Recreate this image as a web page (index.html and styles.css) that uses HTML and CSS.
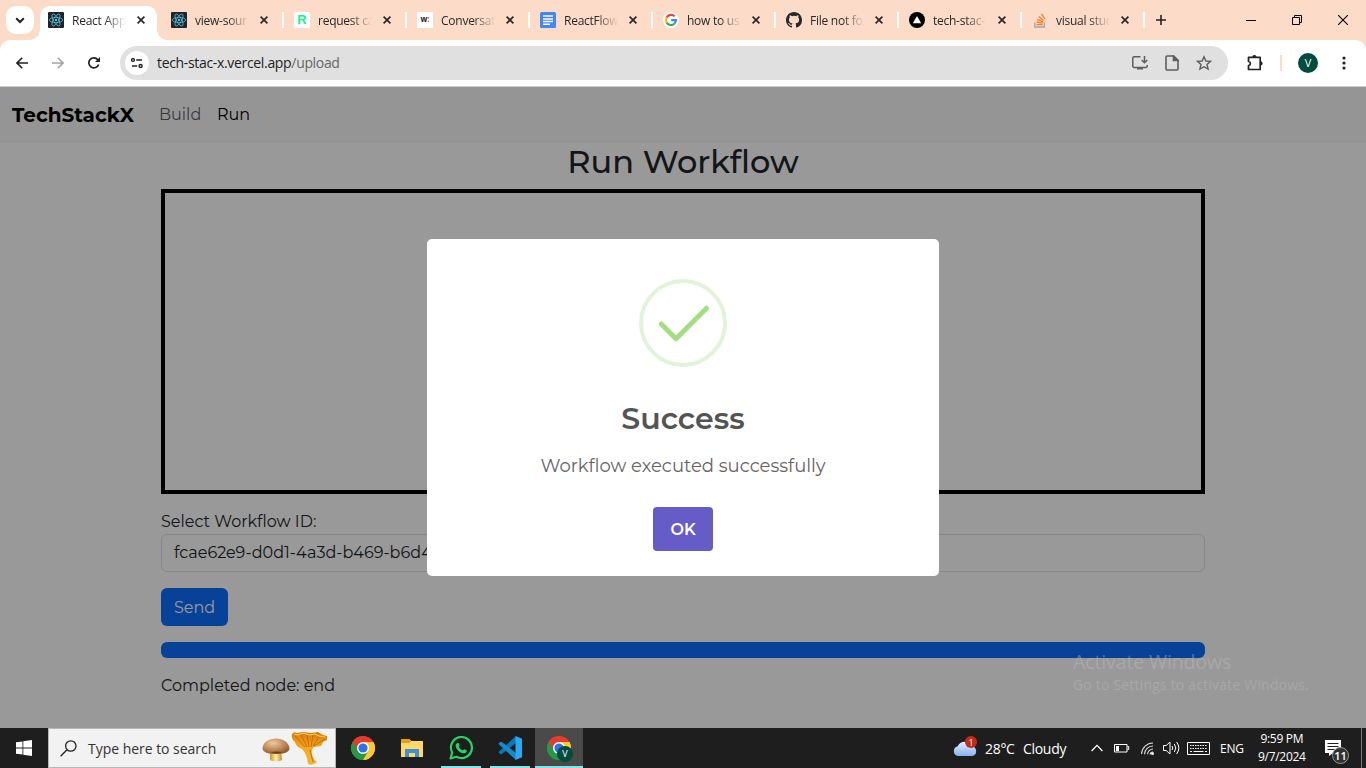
FILE: index.html
```html
<!DOCTYPE html>
<html lang="en">
<head>
<meta charset="utf-8">
<title>React App</title>
<link rel="stylesheet" href="styles.css">
</head>
<body>
<svg class="defs" width="0" height="0">
  <symbol id="close" viewBox="0 0 8 8"><path d="M.6.6l6.8 6.8M7.4.6L.6 7.4" stroke="#282828" stroke-width="1.7"/></symbol>
  <symbol id="react" viewBox="0 0 16 16"><rect width="16" height="16" rx="1" fill="#20232a"/><g fill="none" stroke="#58b9d3" stroke-width=".8"><ellipse cx="8" cy="8" rx="6.7" ry="2.6"/><ellipse cx="8" cy="8" rx="6.7" ry="2.6" transform="rotate(60 8 8)"/><ellipse cx="8" cy="8" rx="6.7" ry="2.6" transform="rotate(120 8 8)"/></g><circle cx="8" cy="8" r="1.3" fill="#58b9d3"/></symbol>
  <symbol id="chrome" viewBox="0 0 24 24"><path d="M12 12L1.61 6A12 12 0 0 1 22.39 6Z" fill="#e33b2e"/><path d="M12 12L22.39 6A12 12 0 0 1 12 24Z" fill="#fcc934"/><path d="M12 12L12 24A12 12 0 0 1 1.61 6Z" fill="#279847"/><path d="M12 6h10.39A12 12 0 0 1 12 24l5.2-9z" fill="#fcc934"/><path d="M1.61 6A12 12 0 0 1 22.39 6H12L6.8 15z" fill="#e33b2e"/><path d="M1.61 6l5.2 9L12 18l5.2-3L12 24A12 12 0 0 1 1.61 6z" fill="#279847"/><circle cx="12" cy="12" r="6" fill="#fff"/><circle cx="12" cy="12" r="4.6" fill="#2f73e8"/></symbol>
</svg>

<header class="browser">
  <div class="tabstrip">
    <button class="tab-search"><svg width="10" height="7" viewBox="0 0 10 7"><path d="M1.2 1.2L5 5l3.8-3.8" fill="none" stroke="#222" stroke-width="2"/></svg></button>
    <div class="tab tab-active"><svg class="fav"><use href="#react"/></svg><span class="tab-title">React App</span><svg class="x"><use href="#close"/></svg></div>
    <div class="tab"><svg class="fav"><use href="#react"/></svg><span class="tab-title">view-sour</span><svg class="x"><use href="#close"/></svg></div>
    <div class="tab"><span class="fav fav-r">R</span><span class="tab-title">request ca</span><svg class="x"><use href="#close"/></svg></div>
    <div class="tab"><span class="fav fav-w">w<i>:</i></span><span class="tab-title">Conversat</span><svg class="x"><use href="#close"/></svg></div>
    <div class="tab"><svg class="fav" viewBox="0 0 16 16"><rect width="16" height="16" rx="1.5" fill="#4285f4"/><path d="M3 4h10M3 7h10M3 9.5h10M3 12.2h7" stroke="#fff" stroke-width="1.4"/></svg><span class="tab-title">ReactFlow</span><svg class="x"><use href="#close"/></svg></div>
    <div class="tab"><svg class="fav" viewBox="0 0 16 16"><circle cx="8" cy="8" r="8" fill="#fff"/><g fill="none" stroke-width="2.1"><path d="M11.7 4.4A5 5 0 0 0 3.6 5.6" stroke="#ea4335"/><path d="M3.6 5.6a5 5 0 0 0 0 4.8" stroke="#fbbc05"/><path d="M3.6 10.4a5 5 0 0 0 7.7 1.4" stroke="#34a853"/><path d="M11.3 11.8A5 5 0 0 0 13 8.1H8.2" stroke="#4285f4"/></g></svg><span class="tab-title">how to us</span><svg class="x"><use href="#close"/></svg></div>
    <div class="tab"><svg class="fav" viewBox="0 0 16 16"><path fill="#24292f" d="M8 0C3.58 0 0 3.58 0 8c0 3.54 2.29 6.53 5.47 7.59.4.07.55-.17.55-.38 0-.19-.01-.82-.01-1.49-2.01.37-2.53-.49-2.69-.94-.09-.23-.48-.94-.82-1.13-.28-.15-.68-.52-.01-.53.63-.01 1.08.58 1.23.82.72 1.21 1.87.87 2.33.66.07-.52.28-.87.51-1.07-1.78-.2-3.64-.89-3.64-3.95 0-.87.31-1.59.82-2.15-.08-.2-.36-1.02.08-2.12 0 0 .67-.21 2.2.82a7.6 7.6 0 0 1 4 0c1.53-1.04 2.2-.82 2.2-.82.44 1.1.16 1.92.08 2.12.51.56.82 1.27.82 2.15 0 3.07-1.87 3.75-3.65 3.95.29.25.54.73.54 1.48 0 1.07-.01 1.93-.01 2.2 0 .21.15.46.55.38A8 8 0 0 0 16 8c0-4.42-3.58-8-8-8z"/></svg><span class="tab-title">File not fo</span><svg class="x"><use href="#close"/></svg></div>
    <div class="tab"><svg class="fav" viewBox="0 0 16 16"><circle cx="8" cy="8" r="8"/><path d="M8 4l4.2 7.2H3.8z" fill="#fff"/></svg><span class="tab-title">tech-stac-</span><svg class="x"><use href="#close"/></svg></div>
    <div class="tab"><svg class="fav" viewBox="0 0 16 16"><path d="M2.8 10.5V15h9.6v-4.5" fill="none" stroke="#a0a4a8" stroke-width="1.3"/><path d="M4.5 12.7h6.3M4.6 10l6.2 1.1M5.2 7.3l5.7 2.5M6.8 4.5l4.8 4M9.5 1.8l3.4 5.2" stroke="#f48024" stroke-width="1.3"/></svg><span class="tab-title">visual stud</span><svg class="x"><use href="#close"/></svg></div>
    <svg class="plus" viewBox="0 0 10 10"><path d="M5 0v10M0 5h10" stroke="#222" stroke-width="1.6"/></svg>
    <div class="window-controls">
      <svg width="10" height="10"><path d="M0 5.5h10" stroke="#000"/></svg>
      <svg width="10" height="10" fill="none" stroke="#000"><path d="M.5 2.5h7v7h-7zM2.5 2.5v-2h7v7h-2"/></svg>
      <svg width="10" height="10"><path d="M0 0l10 10M10 0L0 10" stroke="#000" stroke-width="1.1"/></svg>
    </div>
  </div>
  <div class="toolbar">
    <svg class="nav-ico" viewBox="0 0 12 12"><path d="M12 6H1.2M6.2.8L1 6l5.2 5.2" fill="none" stroke="#222" stroke-width="1.6"/></svg>
    <svg class="nav-ico" viewBox="0 0 12 12"><path d="M0 6h10.8M5.8.8L11 6l-5.2 5.2" fill="none" stroke="#a2a2a2" stroke-width="1.6"/></svg>
    <svg class="nav-ico" viewBox="0 0 12 12"><path d="M10.6 7.4A5 5 0 1 1 9.8 2.8L11 4" fill="none" stroke="#222" stroke-width="1.7"/><path d="M12 0v5H7z" fill="#222"/></svg>
    <div class="omnibox">
      <span class="site-info"><svg width="12" height="10" viewBox="0 0 12 10" fill="none" stroke="#222" stroke-width="1.4"><circle cx="2" cy="2" r="1.4"/><path d="M5.2 2H11M1 8h5.2"/><circle cx="9.6" cy="8" r="1.5"/></svg></span>
      <span class="url">tech-stac-x.vercel.app<em>/upload</em></span>
      <span class="omni-icons">
        <svg width="16" height="16" viewBox="0 0 16 16" fill="none" stroke="#5c5e60" stroke-width="1.5"><path d="M8.5 1.8H2a1.2 1.2 0 0 0-1.2 1.2v8.2A1.2 1.2 0 0 0 2 12.4h12a1.2 1.2 0 0 0 1.2-1.2V10M12.5 1v6.5M9.7 5l2.8 2.8L15.3 5"/><path d="M5 12.5h6v2H5z" fill="#5c5e60" stroke="none"/></svg>
        <svg width="14" height="16" viewBox="0 0 14 16" fill="none" stroke="#5c5e60" stroke-width="1.6"><path d="M8.5 1H2.2A1.2 1.2 0 0 0 1 2.2v11.6A1.2 1.2 0 0 0 2.2 15h9.6a1.2 1.2 0 0 0 1.2-1.2V5.5z"/><path d="M8.5 1v4.5H13z" fill="#5c5e60"/></svg>
        <svg width="16" height="16" viewBox="0 0 16 16"><path d="M8 1.7l1.9 4.3 4.7.4-3.6 3.1 1.1 4.6L8 11.7l-4.1 2.4L5 9.5 1.4 6.4l4.7-.4z" fill="none" stroke="#5c5e60" stroke-width="1.4"/></svg>
      </span>
    </div>
    <svg class="puzzle" viewBox="0 0 18 18"><path d="M2.5 3.3H14.200v12.200H2.500v-4c2.500-.3 2.500-3.700 0-4z" fill="none" stroke="#222" stroke-width="1.700" stroke-linejoin="round"/><path d="M6.300 3a2.100 2.100 0 0 1 4.200 0zM14.500 7.300a2.100 2.100 0 0 1 0 4.200z" fill="#222"/></svg>
    <span class="divider"></span>
    <span class="avatar">V</span>
    <svg class="kebab" viewBox="0 0 4 14"><g fill="#222"><circle cx="2" cy="2" r="1.6"/><circle cx="2" cy="7" r="1.6"/><circle cx="2" cy="12" r="1.6"/></g></svg>
  </div>
</header>

<main class="page">
  <nav class="navbar"><b class="brand">TechStackX</b><a class="link">Build</a><a class="link link-active">Run</a></nav>
  <section class="content">
    <h2 class="heading"><span>Run Workflow</span></h2>
    <div class="canvas"></div>
    <label class="label">Select Workflow ID:</label>
    <div class="select">fcae62e9-d0d1-4a3d-b469-b6d4</div>
    <button class="send">Send</button>
    <div class="progress"></div>
    <p class="status">Completed node: end</p>
  </section>
  <div class="overlay">
    <div class="modal">
      <svg class="check" viewBox="0 0 88 88" fill="none"><circle cx="44" cy="44" r="42" stroke="#e2f3d9" stroke-width="4"/><path d="M22.3 45L37 59.7 67.5 29.2" stroke="#a5dc86" stroke-width="5" stroke-linecap="round" stroke-linejoin="round"/></svg>
      <h3 class="modal-title">Success</h3>
      <p class="modal-text">Workflow executed successfully</p>
      <button class="ok">OK</button>
    </div>
  </div>
  <div class="watermark"><p class="wm-title">Activate Windows</p><p class="wm-text">Go to Settings to activate Windows.</p></div>
</main>

<footer class="taskbar">
  <div class="start"><svg width="16" height="16" viewBox="0 0 16 16" fill="#fff"><path d="M0 2.3l6.500-.9v6.200H0zM7.300 1.300L16 0v7.600H7.300zM0 8.400h6.500v6.200L0 13.700zM7.300 8.400H16V16l-8.700-1.200z"/></svg></div>
  <div class="search">
    <svg width="17" height="17" viewBox="0 0 17 17" fill="none" stroke="#222" stroke-width="1.3"><circle cx="10.8" cy="6" r="5.2"/><path d="M7 9.800L.6 16.300"/></svg>
    <span class="search-text">Type here to search</span>
    <svg class="mushrooms" viewBox="0 0 66 34">
      <defs><radialGradient id="cap" cx=".4" cy=".3" r=".75"><stop offset="0" stop-color="#edc9a0"/><stop offset=".6" stop-color="#bd8554"/><stop offset="1" stop-color="#8a5328"/></radialGradient><linearGradient id="stem"><stop offset="0" stop-color="#c99735"/><stop offset=".5" stop-color="#fff1a2"/><stop offset="1" stop-color="#c18b30"/></linearGradient><linearGradient id="gold" x2="0" y2="1"><stop offset="0" stop-color="#d77c0e"/><stop offset=".5" stop-color="#f7a91e"/><stop offset="1" stop-color="#efb63c"/></linearGradient></defs>
      <path d="M8 19h11l1 10q-6 3-12 0z" fill="url(#stem)"/><path d="M.5 18C.5 4 27 4 27.500 18q-1 5-13.500 5T.5 18z" fill="url(#cap)"/><path d="M9 21.500q5-2 11 0-5 2-11 0z" fill="#71411c"/>
      <path d="M30 3q2-3 5-1l6-1 8 1 7-1 5 3 4 1v4l-4 2-2 4-7 1q-3 2-2 7 1 5 5 8-4 4-9 2-1-10-6-15-6-2-7-7-4-3-3-8z" fill="url(#gold)"/><path d="M33 5l10 11M39 4l6 12M45 4l2 12M51 4l-2 12M57 6l-6 9M63 8l-11 7M48 19l3 12" stroke="#b9620a" stroke-width=".8" fill="none"/><path d="M32 3l4 1 5-2 6 2 6-1 4 2 6 1" stroke="#ffd24e" fill="none"/>
    </svg>
  </div>
  <div class="apps">
    <div class="app"><svg class="app-ico"><use href="#chrome"/></svg></div>
    <div class="app"><svg class="app-ico" viewBox="0 0 24 24"><path d="M1 3h8.500l1.500 2h12v16H1z" fill="#ffd86b"/><path d="M1 3h8.500l1.500 2-1.500 2H1z" fill="#e5a111"/><path d="M5 21v-8h14v8h-4v-4H9v4z" fill="#3c91d4"/></svg></div>
    <div class="app app-open"><svg class="app-ico" viewBox="0 0 24 24"><path d="M1.500 22.500l1.700-6A10.500 10.500 0 1 1 7.500 20.800z" fill="none" stroke="#25d366" stroke-width="2.200" stroke-linejoin="round"/><path d="M7.600 7.500c1-1.200 1.800-1 2.200 0l.7 1.600c.2.600-.9 1.400-.6 1.900.9 1.600 2.100 2.600 3.700 3.300.6.200 1.200-1.400 1.800-1.100l2 1c.6.300.4 1.400-.3 2.200-1.400 1.300-3.300 1-5.300 0-2.300-1.200-4.100-3.200-4.900-5.200-.5-1.500-.3-2.600.7-3.700z" fill="#25d366"/></svg></div>
    <div class="app app-open"><svg class="app-ico" viewBox="0 0 24 24"><path d="M18 0L1 15.500c-.5.500-.5 1 0 1.400l1.300 1.200q.7.500 1.400 0L18 7z" fill="#0877b9"/><path d="M18 24L1 8.500c-.5-.5-.5-1 0-1.400l1.300-1.200q.7-.5 1.400 0L18 17z" fill="#168ad0"/><path d="M17.500 0L24 2.700v18.600L17.500 24z" fill="#2aa9f2"/></svg></div>
    <div class="app app-open app-current"><svg class="app-ico"><use href="#chrome"/></svg><span class="profile">V</span></div>
  </div>
  <div class="weather"><svg width="25" height="24" viewBox="0 0 25 24"><defs><linearGradient id="cloud" x2="0" y2="1"><stop offset="0" stop-color="#e7effc"/><stop offset="1" stop-color="#86b0f0"/></linearGradient></defs><path d="M5 20a5 5 0 0 1-.3-9.800 7.500 7.500 0 0 1 13.800 0A5 5 0 0 1 19.500 20z" fill="url(#cloud)"/><circle cx="18" cy="6" r="6" fill="#c42b1c"/><text class="alert" x="18" y="9.500">1</text></svg><span class="temp">28°C</span><span class="cloudy">Cloudy</span></div>
  <div class="tray">
    <svg width="12" height="8"><path d="M.6 7L6 1.400 11.400 7" fill="none" stroke="#fff" stroke-width="1.300"/></svg>
    <svg width="16" height="10" fill="none" stroke="#fff"><path d="M.5 1.500h12.500v7.500H.5zM13.500 3.500h1.200v3h-1.200"/><path d="M2 3h3v5H2z" fill="#fff" stroke="none"/></svg>
    <svg width="13" height="13" viewBox="0 0 13 13" fill="none" stroke="#ddd" stroke-width="1.100"><path d="M.6 12A11.500 11.500 0 0 1 12 1M3.500 12.300A8.500 8.500 0 0 1 12 4M6.500 12.300A5.500 5.500 0 0 1 12 7M9 12.300A3 3 0 0 1 12 10"/><circle cx="11.500" cy="11.500" r="1" fill="#fff"/></svg>
    <svg width="17" height="14" viewBox="0 0 17 14" fill="none" stroke="#fff"><path d="M.5 4.500h2.700L7 1v12L3.200 9.500H.5zM9 5q1.500 2 0 4M11.300 3q3 4 0 8M13.600 1q4.500 6 0 12"/></svg>
    <svg width="23" height="13" viewBox="0 0 23 13" fill="none" stroke="#fff"><path d="M.5.5h22v12H.5z"/><path d="M3 3.500h17M3 6.500h17" stroke-dasharray="1.500 1"/><path d="M3 9.500h2M6.500 9.500h10M18 9.500h2"/></svg>
    <span class="lang">ENG</span>
  </div>
  <div class="clock"><span>9:59 PM</span><span class="date">9/7/2024</span></div>
  <div class="notif"><svg width="16" height="16" viewBox="0 0 16 16"><path d="M0 0h16v13H8l-4 3v-3H0z" fill="#fff"/><path d="M2.500 3.500h11M2.500 6.500h11M2.500 9.500h7" stroke="#222"/></svg><span class="count">11</span></div>
</footer>
</body>
</html>
```
FILE: styles.css
```css
* { box-sizing: border-box; margin: 0; padding: 0; }
body { width: 1366px; height: 768px; overflow: hidden; display: flex; flex-direction: column; background: #fcdbc9; font-family: "Open Sans", "Noto Sans", sans-serif; }
button { border: 0; font: inherit; }
svg { display: block; flex: none; }
.defs { position: absolute; }

.browser { height: 87px; flex: none; border-bottom: 1px solid #c9cac9; }
.tabstrip { height: 40px; display: flex; align-items: center; position: relative; }
.tab-search { width: 28px; height: 28px; margin: 0 6px; border-radius: 10px; background: #fff; display: grid; place-items: center; }
.tab { width: 121px; height: 16px; margin-right: 2px; padding-left: 8px; display: flex; align-items: center; border-right: 2px solid #fff; }
.tab-active { position: relative; width: 117px; height: 34px; margin-right: 6px; align-self: flex-end; padding-bottom: 6px; border: 0; background: #fff; border-radius: 10px 10px 0 0; }
.tab-active::before, .tab-active::after { content: ""; position: absolute; bottom: 0; width: 10px; height: 10px; }
.tab-active::before { left: -10px; background: radial-gradient(circle at 0 0, transparent 9.5px, #fff 10px); }
.tab-active::after { right: -10px; background: radial-gradient(circle at 100% 0, transparent 9.5px, #fff 10px); }
.fav { width: 16px; height: 16px; margin-right: 8px; flex: none; }
.fav-r, .fav-w { background: #fff; border-radius: 1px; text-align: center; line-height: 16px; }
.fav-r { color: #19f08b; font: 700 13px/16px "Liberation Sans", sans-serif; }
.fav-w { font: 700 8px/14px "Open Sans", sans-serif; color: #222; }
.fav-w i { font-style: normal; color: #e8363b; }
.tab-title { width: 54px; margin-right: 11px; padding-top: 1px; white-space: nowrap; font-size: 12px; letter-spacing: -.25px; line-height: 17px; color: #282828; -webkit-mask-image: linear-gradient(90deg, #000 60%, transparent); mask-image: linear-gradient(90deg, #000 60%, transparent); }
.x { width: 8px; height: 8px; }
.plus { width: 10px; height: 10px; margin-left: 9px; }
.window-controls { margin-left: auto; display: flex; gap: 36px; padding-right: 18px; }

.toolbar { height: 46px; display: flex; align-items: center; background: #fff; border-radius: 10px 10px 0 0; padding-left: 16px; }
.nav-ico { width: 12px; height: 12px; margin-right: 24px; }
.omnibox { width: 1108px; height: 34px; margin-left: -4px; border-radius: 17px; background: #e0e0e0; display: flex; align-items: center; padding: 0 16px 0 5px; }
.site-info { width: 24px; height: 24px; border-radius: 50%; background: #fff; display: grid; place-items: center; }
.url { margin-left: 8px; padding-bottom: 2px; font-size: 14px; letter-spacing: -.33px; color: #222; }
.url em { font-style: normal; color: #666; }
.omni-icons { margin-left: auto; display: flex; gap: 17px; }
.puzzle { width: 18px; height: 18px; margin-left: 18px; }
.divider { width: 2px; height: 16px; margin-left: 16px; background: #fcdbc9; }
.avatar { width: 20px; height: 20px; margin-left: 16px; border-radius: 50%; background: #004d40; color: #fff; font-size: 11px; line-height: 20px; text-align: center; }
.kebab { width: 4px; height: 14px; margin-left: 24px; }

.page { position: relative; height: 641px; background: #fff; font-family: Montserrat, Inter, sans-serif; font-weight: 400; color: #212529; }
.navbar { height: 56px; display: flex; align-items: center; padding-left: 12px; background: #f8f9fa; }
.brand { width: 147px; font-size: 20px; font-weight: 700; color: #000; }
.link { width: 58px; padding-bottom: 1px; font-size: 16px; color: rgba(0,0,0,.65); }
.link-active { color: #000; }
.content { width: 1044px; margin: 0 auto; display: flex; flex-direction: column; }
.heading { height: 38px; margin-bottom: 8px; font-size: 32px; line-height: 38px; font-weight: 500; text-align: center; }
.canvas { height: 305px; border: 4px solid #000; }
.label { height: 24px; margin: 16px 0 0; font-size: 16px; line-height: 24px; }
.select { height: 38px; border: 1px solid #dee2e6; border-radius: 6px; padding-left: 12px; font-size: 16px; line-height: 36px; }
.send { width: 67px; height: 38px; margin: 16px 0; border-radius: 6px; background: #0d6efd; color: #fff; font-size: 16px; }
.progress { height: 16px; border-radius: 6px; background: #0d6efd; }
.status { margin-top: 16px; font-size: 16px; line-height: 24px; }

.overlay { position: absolute; inset: 0; display: flex; justify-content: center; align-items: center; background: rgba(0,0,0,.4); }
.modal { width: 512px; height: 337px; border-radius: 5px; background: #fff; padding-top: 40px; display: flex; flex-direction: column; align-items: center; }
.check { width: 88px; height: 88px; }
.modal-title { margin-top: 33px; font-size: 30px; line-height: 38px; font-weight: 600; color: #545454; }
.modal-text { margin-top: 17px; font-size: 18px; line-height: 22px; color: #646464; }
.ok { width: 60px; height: 44px; margin-top: 30px; border-radius: 4px; background: #665cc8; color: #fff; font-size: 16px; font-weight: 600; }
.watermark { position: absolute; left: 1073px; top: 561px; color: rgba(190,190,190,.42); font-family: "Open Sans", sans-serif; font-weight: 400; white-space: nowrap; }
.wm-title { font-size: 19.5px; line-height: 28px; letter-spacing: -.12px; }
.wm-text { font-size: 14px; line-height: 18px; letter-spacing: .19px; }

.taskbar { height: 40px; flex: none; background: #1e1e1e; color: #fff; display: flex; align-items: center; font-size: 12px; }
.start { width: 48px; display: grid; place-items: center; }
.search { width: 288px; height: 40px; border: 1px solid #b8b8b8; background: #f2f2f2; color: #333; display: flex; align-items: center; padding-left: 11px; }
.search-text { width: 174px; margin-left: 11px; font-size: 14px; letter-spacing: -.03px; }
.mushrooms { width: 66px; height: 34px; }
.apps { display: flex; gap: 1px; margin-left: 3px; }
.app { position: relative; width: 48px; height: 40px; display: grid; place-items: center; }
.app-ico { width: 24px; height: 24px; }
.app-open::after { content: ""; position: absolute; left: 4px; right: 4px; bottom: 0; height: 2px; background: #85e2e7; }
.app-current { background: #4a4a4a; }
.app-current::after { left: 0; right: 0; }
.profile { position: absolute; left: 22px; top: 18px; width: 16px; height: 16px; border-radius: 50%; background: #004d40; font-size: 9px; line-height: 16px; text-align: center; }
.weather { display: flex; align-items: center; width: 138px; margin-left: 370px; font-size: 14px; letter-spacing: -.3px; }
.alert { fill: #fff; font-size: 9px; text-anchor: middle; }
.temp { width: 38px; margin-left: 7px; }
.tray { display: flex; align-items: center; gap: 9px; }
.tray > :nth-child(2) { margin: 0 2px; }
.tray > :nth-child(5) { margin-left: -2px; }
.lang { margin-left: 1px; letter-spacing: -.2px; }
.clock { width: 60px; margin-left: 8px; display: flex; flex-direction: column; align-items: center; line-height: 18px; letter-spacing: -.3px; }
.notif { position: relative; height: 40px; width: 37px; margin-left: auto; padding-top: 12px; border-right: 1px solid #777; margin-right: 4px; }
.count { position: absolute; left: 7px; top: 19px; width: 17px; height: 17px; border: 1px solid #999; border-radius: 50%; background: #333; font-size: 11px; font-weight: 600; line-height: 15px; text-align: center; }
```
